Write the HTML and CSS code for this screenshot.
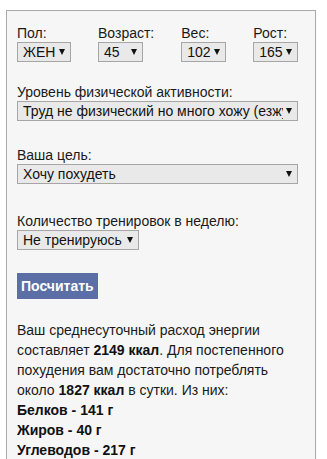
FILE: index.html
```html
<!DOCTYPE html>
<html lang="ru">
<head>
  <meta charset="UTF-8" />
  <meta name="viewport" content="width=device-width, initial-scale=1.0" />
  <title>Калькулятор калорий</title>
  <link rel="stylesheet" href="styles.css">
</head>
<body>
  <div class="calc">
    <div class="row">
      <div class="field">
        <label>Пол:</label>
        <span class="sel w-sex"><select><option>ЖЕН</option><option>МУЖ</option></select></span>
      </div>
      <div class="field">
        <label>Возраст:</label>
        <span class="sel w-num"><select><option>45</option></select></span>
      </div>
      <div class="field">
        <label>Вес:</label>
        <span class="sel w-num"><select><option>102</option></select></span>
      </div>
      <div class="field">
        <label>Рост:</label>
        <span class="sel w-num"><select><option>165</option></select></span>
      </div>
    </div>

    <div class="block activity">
      <label>Уровень физической активности:</label>
      <span class="sel w-full"><select><option>Труд не физический но много хожу (езжу на велосипеде)</option></select></span>
    </div>

    <div class="block goal">
      <label>Ваша цель:</label>
      <span class="sel w-full"><select><option>Хочу похудеть</option></select></span>
    </div>

    <div class="block trainings">
      <label>Количество тренировок в неделю:</label>
      <span class="sel w-train"><select><option>Не тренируюсь</option></select></span>
    </div>

    <button class="go">Посчитать</button>

    <p class="result">
      Ваш среднесуточный расход энергии составляет <b>2149 ккал</b>. Для постепенного похудения вам достаточно потреблять около <b>1827 ккал</b> в сутки. Из них:<br>
      <b>Белков - 141 г</b><br>
      <b>Жиров - 40 г</b><br>
      <b>Углеводов - 217 г</b>
    </p>
  </div>
</body>
</html>
```

FILE: styles.css
```css
body {
  margin: 0;
  font-family: 'Liberation Sans', Arial, sans-serif;
  font-size: 14px;
  color: #1a1a1a;
  background: #fff;
}
.calc {
  box-sizing: border-box;
  width: 310px;
  margin: 10px 0 0 6px;
  padding: 14px 10px 20px;
  background: #f6f6f6;
  border: 1px solid #a9a9a9;
}
label {
  display: block;
  line-height: 16px;
  margin-bottom: 1px;
}
.row {
  display: flex;
  gap: 27px;
}
.activity {
  margin-top: 22px;
}
.goal {
  margin-top: 26px;
}
.trainings {
  margin-top: 29px;
}
.sel {
  position: relative;
  display: block;
  height: 20px;
}
.sel select {
  appearance: none;
  -webkit-appearance: none;
  box-sizing: border-box;
  width: 100%;
  height: 20px;
  margin: 0;
  padding: 0 14px 0 5px;
  font-family: inherit;
  font-size: 14px;
  color: #111;
  background: #e9e9e9;
  border: 1px solid #a6a6a6;
  border-radius: 0;
  text-overflow: clip;
}
.sel::after {
  content: "";
  position: absolute;
  right: 6px;
  top: 7px;
  border-left: 3px solid transparent;
  border-right: 3px solid transparent;
  border-top: 6px solid #111;
  pointer-events: none;
}
.w-sex { width: 54px; }
.w-num { width: 45px; }
.w-full { width: 281px; }
.w-train { width: 122px; }
.go {
  display: block;
  height: 26px;
  margin-top: 23px;
  padding: 0 4px;
  font-family: inherit;
  font-size: 14px;
  font-weight: bold;
  color: #fff;
  background: #5b6ea6;
  border: none;
}
.result {
  margin: 21px 0 0;
  line-height: 20px;
}
.result b {
  color: #111;
}
```
